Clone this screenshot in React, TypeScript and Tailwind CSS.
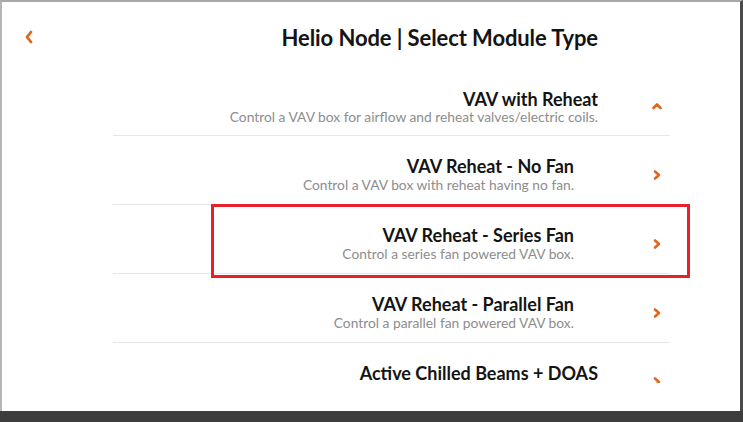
import React from "react";

const ORANGE = "#e0661f";

function ChevronRight() {
  return (
    <svg width="10" height="12" viewBox="0 0 10 12" className="block">
      <polyline points="3,2.5 7,6 3,9.5" fill="none" stroke={ORANGE} strokeWidth="2.6" strokeLinecap="round" strokeLinejoin="round" />
    </svg>
  );
}

function ChevronUp() {
  return (
    <svg width="12" height="10" viewBox="0 0 12 10" className="block">
      <polyline points="2.5,7 6,3.5 9.5,7" fill="none" stroke={ORANGE} strokeWidth="2.6" strokeLinecap="round" strokeLinejoin="round" />
    </svg>
  );
}

function ChevronLeft() {
  return (
    <svg width="12" height="16" viewBox="0 0 12 16" className="block">
      <polyline points="8,3 4,8 8,13" fill="none" stroke={ORANGE} strokeWidth="2.8" strokeLinecap="round" strokeLinejoin="round" />
    </svg>
  );
}

const subItems = [
  { title: "VAV Reheat - No Fan", sub: "Control a VAV box with reheat having no fan." },
  { title: "VAV Reheat - Series Fan", sub: "Control a series fan powered VAV box." },
  { title: "VAV Reheat - Parallel Fan", sub: "Control a parallel fan powered VAV box." },
];

export default function App() {
  return (
    <div
      className="relative w-[743px] h-[422px] overflow-hidden bg-white"
      style={{ fontFamily: "Lato, 'Open Sans', sans-serif" }}
    >
      <div className="flex flex-col h-full border-t-2 border-l-2 border-r-[3px] border-t-[#a8a8a8] border-l-[#b5b5b5] border-r-[#4a4a4a]">
        {/* header */}
        <div className="h-[65px] shrink-0 flex items-start pt-[24px] pl-[21px] pr-[142px]">
          <div className="h-[24px] flex items-center -mt-[1px]">
            <ChevronLeft />
          </div>
          <div className="flex-1 text-right text-[22px] leading-[24px] font-bold text-[#141414] tracking-[-0.1px]">
            Helio Node | Select Module Type
          </div>
        </div>

        {/* list */}
        <div className="ml-[111px] w-[557px] h-[316px] overflow-hidden">
          <div className="h-[69px] border-b border-[#e6e6e6] flex pt-[22px]">
            <div className="flex-1 flex flex-col items-end pr-[46px]">
              <div className="text-[18px] leading-[20px] font-bold text-[#141414]">VAV with Reheat</div>
              <div className="text-[13.8px] leading-[16px] text-[#8d8d8d]">
                Control a VAV box for airflow and reheat valves/electric coils.
              </div>
            </div>
            <div className="w-[26px] flex justify-center pt-[12px]">
              <ChevronUp />
            </div>
          </div>
          {subItems.map((it) => (
            <div key={it.title} className="h-[69px] border-b border-[#e6e6e6] flex pt-[20px]">
              <div className="flex-1 flex flex-col items-end pr-[70px]">
                <div className="text-[18px] leading-[20px] font-bold text-[#141414]">{it.title}</div>
                <div className="mt-[1px] text-[13.8px] leading-[16px] text-[#8d8d8d]">{it.sub}</div>
              </div>
              <div className="w-[26px] flex justify-center pt-[13px]">
                <ChevronRight />
              </div>
            </div>
          ))}
          <div className="h-[69px] flex pt-[20px]">
            <div className="flex-1 flex flex-col items-end pr-[46px]">
              <div className="text-[18px] leading-[20px] font-bold text-[#141414]">Active Chilled Beams + DOAS</div>
            </div>
            <div className="w-[26px] flex justify-center pt-[13px]">
              <ChevronRight />
            </div>
          </div>
        </div>
        <div className="flex-1" />
        <div className="h-[11px] shrink-0 bg-[#3d3d3d] -ml-[2px] -mr-[3px]" />
      </div>

      {/* annotation box */}
      <div className="absolute left-[211px] top-[204px] w-[479px] h-[74px] border-[3px] border-[#e8202a]" />
    </div>
  );
}
